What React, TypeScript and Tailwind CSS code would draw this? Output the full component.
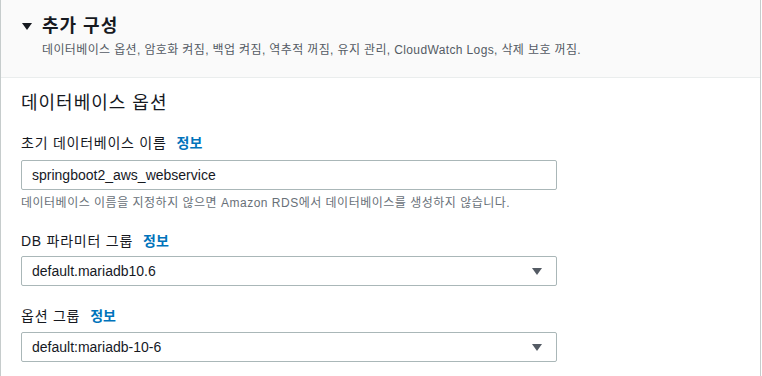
const font = { fontFamily: '"Liberation Sans", "Noto Sans CJK KR", sans-serif' };

function Caret({ className }: { className?: string }) {
  return (
    <svg width="10" height="7" viewBox="0 0 10 7" className={className}>
      <path d="M0 0 H10 L5 7 Z" fill="currentColor" />
    </svg>
  );
}

function Label({ text }: { text: string }) {
  return (
    <div className="flex items-center gap-[10px] text-[14px] leading-[20px] text-[#16191f]">
      <span className="tracking-[0.75px]">{text}</span>
      <a className="font-bold text-[#0073bb]">정보</a>
    </div>
  );
}

function SelectBox({ value }: { value: string }) {
  return (
    <div className="flex h-[30px] w-[536px] items-center justify-between rounded-[2px] border border-[#aab7b8] bg-white pl-[10px] pr-[14px] text-[14px] text-[#16191f]">
      <span>{value}</span>
      <Caret className="text-[#545b64]" />
    </div>
  );
}

export default function App() {
  return (
    <div className="min-h-screen bg-white" style={font}>
      <div className="h-[376px] w-[761px] border-x border-[#c6cccc]">
        {/* header */}
        <div className="h-[78px] border-b border-[#eaeded] bg-[#fafafa] pl-[21px] pt-[14px]">
          <div className="flex items-center gap-[10px]">
            <Caret className="text-[#16191f]" />
            <span className="text-[18px] font-bold leading-[24px] tracking-[1px] text-[#16191f]">추가 구성</span>
          </div>
          <div className="mt-[4px] pl-[20px] text-[12px] leading-[16px] tracking-[0.37px] text-[#545b64]">
            데이터베이스 옵션, 암호화 켜짐, 백업 켜짐, 역추적 꺼짐, 유지 관리, CloudWatch Logs, 삭제 보호 꺼짐.
          </div>
        </div>

        <div className="px-[20px] pt-[13px]">
          <div className="text-[18px] leading-[24px] tracking-[1px] text-[#16191f]">데이터베이스 옵션</div>

          <div className="mt-[18px]">
            <Label text="초기 데이터베이스 이름" />
          </div>
          <div className="mt-[7px] flex h-[30px] w-[536px] items-center rounded-[2px] border border-[#aab7b8] bg-white pl-[10px] text-[14px] text-[#16191f]">
            springboot2_aws_webservice
          </div>
          <div className="mt-[5px] text-[12px] leading-[16px] tracking-[0.5px] text-[#687078]">
            데이터베이스 이름을 지정하지 않으면 Amazon RDS에서 데이터베이스를 생성하지 않습니다.
          </div>

          <div className="mt-[20px]">
            <Label text="DB 파라미터 그룹" />
          </div>
          <div className="mt-[5px]">
            <SelectBox value="default.mariadb10.6" />
          </div>

          <div className="mt-[20px]">
            <Label text="옵션 그룹" />
          </div>
          <div className="mt-[6px]">
            <SelectBox value="default:mariadb-10-6" />
          </div>
        </div>
      </div>
    </div>
  );
}
